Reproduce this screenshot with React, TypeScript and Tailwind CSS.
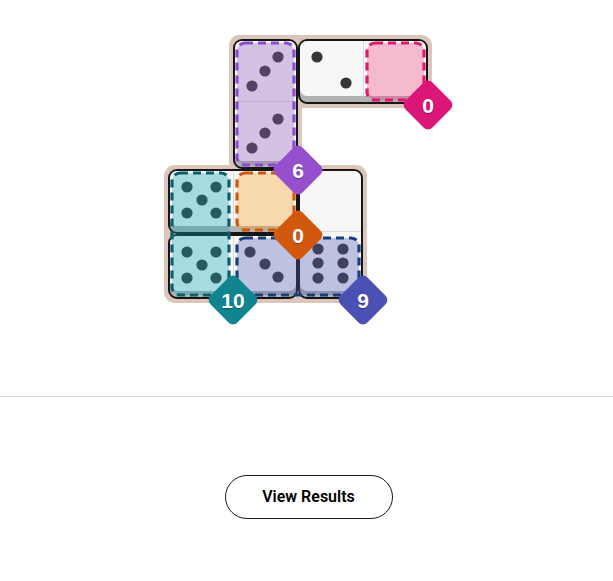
import React from 'react';

type Pt = [number, number];

// pip coordinates are in cell space (65x65, origin at the cell's top-left)
function Pips({ cls, pts }: { cls: string; pts: Pt[] }) {
  return (
    <svg className={`${cls} w-[65px] h-[65px]`} viewBox="0 0 65 65">
      {pts.map(([x, y], i) => (
        <circle key={i} cx={x} cy={y} r={5.6} fill="#363636" />
      ))}
    </svg>
  );
}

function Domino({ cls, vertical }: { cls: string; vertical?: boolean }) {
  return (
    <div className={`${cls} flex flex-col rounded-[9px] border-2 border-[#161616] bg-[#b2b2b2] overflow-hidden`}>
      <div className={`flex-1 mb-[6px] rounded-b-[7px] bg-[#f7f7f7] flex ${vertical ? 'flex-col' : 'flex-row'}`}>
        <div className={`flex-1 ${vertical ? 'border-b' : 'border-r'} border-[#dcdcdc]`} />
        <div className="flex-1" />
      </div>
    </div>
  );
}

// dashed region outline, drawn so the dash length matches
function Region({ cls, w, h, stroke, fill }: { cls: string; w: number; h: number; stroke: string; fill: string }) {
  return (
    <div className={`${cls} m-[2px] relative`}>
      <svg width={w} height={h} className="absolute left-0 top-0">
        <rect
          x={2}
          y={2}
          width={w - 4}
          height={h - 4}
          rx={8}
          fill={fill}
          fillOpacity={0.34}
          stroke={stroke}
          strokeWidth={3.2}
          strokeDasharray="8 5"
        />
      </svg>
    </div>
  );
}

function Label({ cls, value, color }: { cls: string; value: string; color: string }) {
  return (
    <div className={`${cls} relative`}>
      <div className="absolute right-0 bottom-0 w-0 h-0">
        <div className={`absolute -left-[19px] -top-[18px] w-[38px] h-[38px] rotate-45 rounded-[6px] ${color}`} />
        <div className="absolute -left-[25px] -top-[15px] w-[50px] h-[32px] flex items-center justify-center text-white text-[21px] font-bold leading-none [font-family:'Liberation_Sans',Arial,sans-serif] [text-shadow:0_1px_1px_rgba(0,0,0,0.35)]">
          {value}
        </div>
      </div>
    </div>
  );
}

export default function App() {
  return (
    <div className="w-full min-h-screen bg-white [font-family:Roboto,'Liberation_Sans',sans-serif]">
      <div className="h-[396px] pt-[39px] pl-[168px]">
        <div className="grid grid-cols-[repeat(4,65px)] grid-rows-[repeat(4,65px)] w-[260px]">
          {/* board */}
          <div className="col-start-2 col-span-3 row-start-1 -m-[4px] rounded-[11px] bg-[#dcc5bb]" />
          <div className="col-start-2 row-start-1 row-span-3 -m-[4px] rounded-[11px] bg-[#dcc5bb]" />
          <div className="col-start-1 col-span-3 row-start-3 row-span-2 -m-[4px] rounded-[11px] bg-[#dcc5bb]" />

          {/* dominoes */}
          <Domino cls="col-start-2 row-start-1 row-span-2" vertical />
          <Domino cls="col-start-3 col-span-2 row-start-1" />
          <Domino cls="col-start-1 col-span-2 row-start-3" />
          <Domino cls="col-start-1 col-span-2 row-start-4" />
          <Domino cls="col-start-3 row-start-3 row-span-2" vertical />

          {/* pips */}
          <Pips cls="col-start-2 row-start-1" pts={[[45, 18], [32, 32], [19, 47]]} />
          <Pips cls="col-start-2 row-start-2" pts={[[45, 15], [32, 29], [19, 44]]} />
          <Pips cls="col-start-3 row-start-1" pts={[[19, 18], [48, 44]]} />
          <Pips cls="col-start-1 row-start-3" pts={[[19, 18], [48, 18], [34, 31], [19, 44], [48, 44]]} />
          <Pips cls="col-start-1 row-start-4" pts={[[19, 18], [48, 18], [34, 31], [19, 44], [48, 44]]} />
          <Pips cls="col-start-2 row-start-4" pts={[[17, 18], [32, 30], [45, 43]]} />
          <Pips cls="col-start-3 row-start-4" pts={[[20, 15], [45, 15], [20, 29], [45, 29], [20, 44], [45, 44]]} />

          {/* regions */}
          <Region cls="col-start-2 row-start-1 row-span-2" w={61} h={126} stroke="#8a4bcf" fill="#8d5cbd" />
          <Region cls="col-start-4 row-start-1" w={61} h={61} stroke="#e0186e" fill="#f4447e" />
          <Region cls="col-start-2 row-start-3" w={61} h={61} stroke="#d0580c" fill="#fa9f20" />
          <Region cls="col-start-1 row-start-3 row-span-2" w={61} h={126} stroke="#0b5f6b" fill="#0ea5b7" />
          <Region cls="col-start-2 col-span-2 row-start-4" w={126} h={61} stroke="#17407a" fill="#5059b1" />

          {/* labels */}
          <Label cls="col-start-2 row-start-2" value="6" color="bg-[#9650cd]" />
          <Label cls="col-start-4 row-start-1" value="0" color="bg-[#dc1677]" />
          <Label cls="col-start-2 row-start-3" value="0" color="bg-[#d2580e]" />
          <Label cls="col-start-1 row-start-4" value="10" color="bg-[#0e858f]" />
          <Label cls="col-start-3 row-start-4" value="9" color="bg-[#4a50b4]" />
        </div>
      </div>

      <div className="border-t border-[#dedede]" />

      <div className="flex justify-center pt-[78px] pl-[4px]">
        <button className="w-[168px] h-[44px] rounded-full border border-[#1a1a1a] bg-white text-[16px] font-semibold text-black">
          View Results
        </button>
      </div>
    </div>
  );
}
